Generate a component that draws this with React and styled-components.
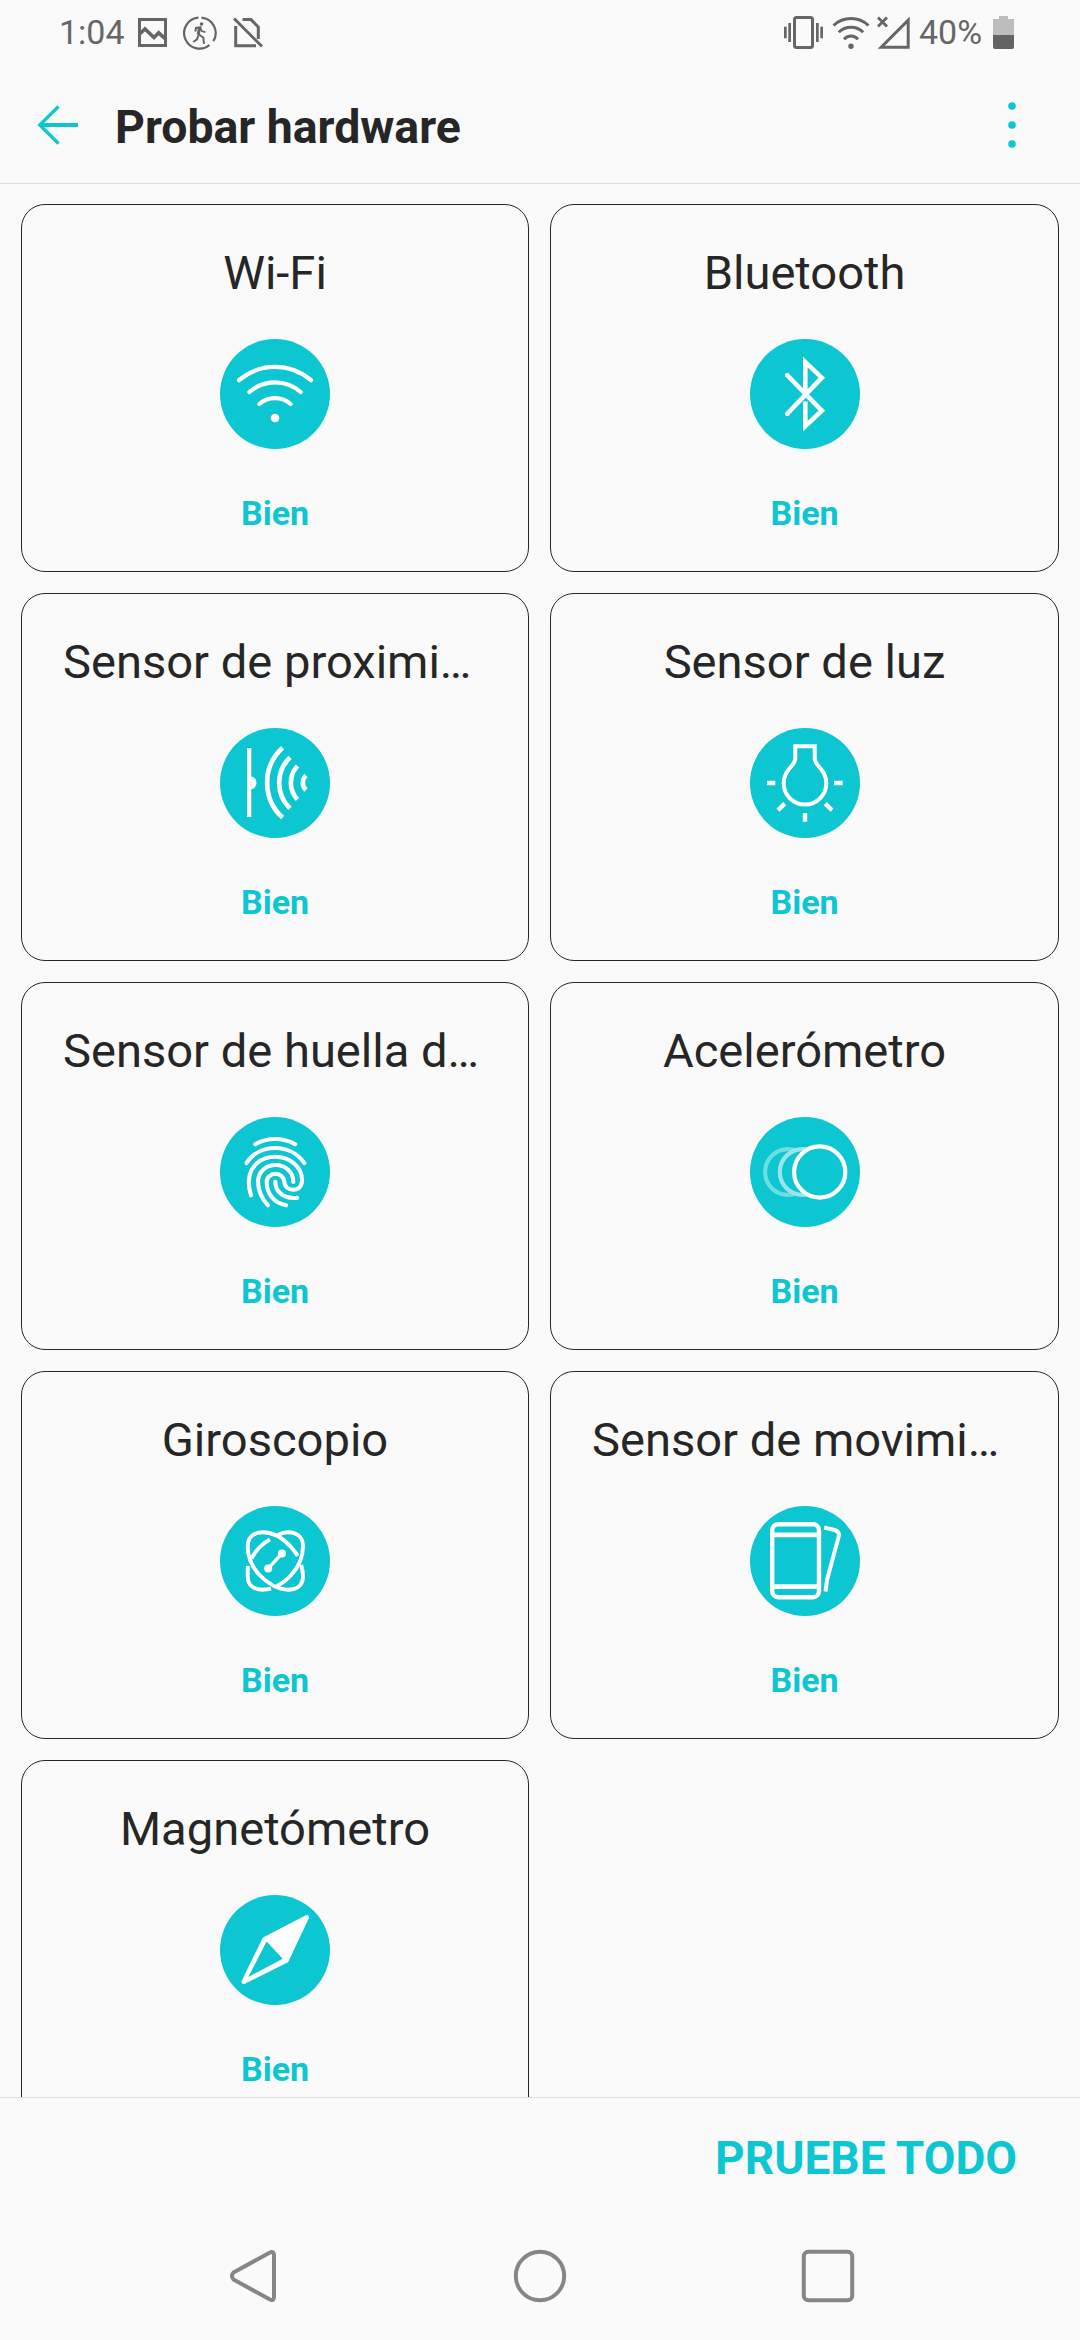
import React from "react";
import styled, { createGlobalStyle } from "styled-components";

const TEAL = "#0cc6d2";
const TEXT = "#262626";
const STATUS = "#666666";
const LINE = "#dddddd";
const NAV = "#868686";

const GlobalStyle = createGlobalStyle`
  * { box-sizing: border-box; }
  body {
    margin: 0;
    background: #fafafa;
    font-family: Roboto, "Noto Sans", sans-serif;
  }
`;

const Screen = styled.div`
  display: flex;
  flex-direction: column;
  width: 1080px;
  height: 2340px;
  overflow: hidden;
  background: #fafafa;
  color: ${TEXT};
`;

const StatusBar = styled.div`
  display: flex;
  justify-content: space-between;
  align-items: flex-start;
  height: 66px;
  padding: 13px 66px 0 59px;
  color: ${STATUS};
`;

const StatusGroup = styled.div`
  display: flex;
  align-items: center;
  height: 39px;
`;

const StatusText = styled.span`
  width: ${(p) => p.$width}px;
  margin-left: ${(p) => p.$left || 0}px;
  font-size: 34px;
  line-height: 39px;
  white-space: nowrap;
`;

const Glyph = styled.svg`
  display: block;
  flex: none;
  width: ${(p) => p.$w}px;
  height: ${(p) => p.$h}px;
  margin-left: ${(p) => p.$left || 0}px;
`;

const Header = styled.header`
  display: flex;
  align-items: center;
  height: 118px;
  padding: 0 62px 0 37px;
  border-bottom: 1px solid ${LINE};
`;

const Title = styled.h1`
  flex: 1;
  margin: 4px 0 0 37px;
  font-size: 46.4px;
  font-weight: 700;
  line-height: 54px;
`;

const Content = styled.main`
  flex: 1;
  min-height: 0;
  padding: 20px 21px;
  overflow: hidden;
`;

const Grid = styled.div`
  display: grid;
  grid-template-columns: 508px 509px;
  grid-auto-rows: 368px;
  gap: 21px;
`;

const Card = styled.section`
  display: flex;
  flex-direction: column;
  align-items: center;
  padding: 41px 0 0;
  border: 1px solid ${TEXT};
  border-radius: 24px;
`;

const CardTitle = styled.h2`
  align-self: stretch;
  margin: 0;
  padding: 0 41px;
  font-size: 47.1px;
  font-weight: 400;
  line-height: 54px;
  text-align: ${(p) => (p.$clipped ? "left" : "center")};
  white-space: nowrap;
`;

const Badge = styled.svg`
  display: block;
  width: 110px;
  height: 110px;
  margin-top: 39px;
`;

const Result = styled.span`
  margin-top: 43px;
  color: ${TEAL};
  font-size: 34px;
  font-weight: 700;
  line-height: 42px;
`;

const ActionBar = styled.footer`
  display: flex;
  justify-content: flex-end;
  align-items: center;
  height: 115px;
  padding: 5px 63px 0 0;
  border-top: 1px solid ${LINE};
`;

const ActionButton = styled.button`
  padding: 0;
  border: 0;
  background: none;
  color: ${TEAL};
  font: 700 46px/54px Roboto, "Noto Sans", sans-serif;
`;

const NavBar = styled.nav`
  display: flex;
  justify-content: space-between;
  align-items: center;
  height: 128px;
  padding: 0 225px 0 227px;
`;

const line = {
  fill: "none",
  stroke: "#fff",
  strokeWidth: 4.4,
  strokeLinecap: "round",
  strokeLinejoin: "round",
};

const icons = {
  wifi: (
    <g {...line} strokeWidth={4.2}>
      <path d="M19 41.2A55.5 55.5 0 0 1 91 41.2" />
      <path d="M29.4 53A38.9 38.9 0 0 1 80.6 53" />
      <path d="M39.4 65A23.5 23.5 0 0 1 70.6 65" />
      <circle cx="55" cy="79" r="4.3" fill="#fff" stroke="none" />
    </g>
  ),
  bluetooth: (
    <g {...line} strokeLinecap="butt" strokeLinejoin="miter">
      <path d="M36.5 35.5L71.8 71.7L55.3 87.2V62.5" strokeWidth="4.6" />
      <path d="M36.5 75.5L71.8 38.7L55.3 23V56" strokeWidth="4.6" />
      <circle cx="37" cy="36" r="2.1" fill="#fff" stroke="none" />
      <circle cx="37" cy="75" r="2.1" fill="#fff" stroke="none" />
    </g>
  ),
  proximity: (
    <g {...line}>
      <rect x="27" y="20" width="4.3" height="69" fill="#fff" stroke="none" />
      <path d="M31 48.5A5.5 6.3 0 0 1 31 61.1Z" fill="#fff" stroke="none" />
      <g strokeWidth="4.7" strokeLinecap="butt">
        <path d="M62.6 19.7A47.2 47.2 0 0 0 62.6 89.6" />
        <path d="M70 29.4A35.5 35.5 0 0 0 70 80.4" />
        <path d="M77.5 38A24.3 24.3 0 0 0 77.5 71.4" />
        <path d="M86 47.4A10 10 0 0 0 86 62" />
      </g>
    </g>
  ),
  bulb: (
    <g {...line} strokeLinecap="butt">
      <path
        d="M45.3 18.2H64.7V31C64.7 37.5 76.3 41.5 76.3 55.3A21.3 21.3 0 0 1 33.7 55.3C33.7 41.5 45.3 37.5 45.3 31Z"
        strokeWidth="4"
        strokeLinejoin="miter"
      />
      <path d="M17 55H25.3M84 55H92.7M55 85V93.8M28 82.3L34.7 75.6M75.3 75.6L82 82.3" />
    </g>
  ),
  fingerprint: (
    <g {...line} strokeWidth={4.1}>
      <path d="M35.3 27.3C47.5 20.3 62.5 20.3 75.2 27.3" />
      <path d="M26.5 46C39.5 26 70.5 26 84.3 46" />
      <path d="M31 78.3C29 72 28.5 68 29 62.5C30 49 41 39.7 55 39.7C70 39.7 82 50 82 63C82 69 78.5 72.7 73.3 72.7C68 72.7 64.5 69.5 64.3 64.7C64 60 60 56.7 55.5 56.7C50.5 56.7 46.7 60.5 46.7 65C46.7 78 55 86 66 88.3" />
      <path d="M48 88.3C42 82 38 74 38 64C38.5 54.5 46 48 55.5 48C65.5 48 73.3 55 73.3 65" />
      <path d="M55.3 64.7C55.3 75 64 82.5 77.3 80.7" />
    </g>
  ),
  accelerometer: (
    <g fill="none" stroke="#fff" strokeWidth="4.2">
      <circle cx="38" cy="55" r="22.9" strokeOpacity=".4" />
      <circle cx="52.7" cy="55" r="25" fill={TEAL} stroke="none" />
      <circle cx="52.7" cy="55" r="22.9" strokeOpacity=".57" />
      <circle cx="69.7" cy="55" r="25.6" fill={TEAL} />
    </g>
  ),
  gyroscope: (
    <g {...line} strokeWidth={3.9} strokeLinecap="butt">
      <path d="M81.3 59C82.4 63 83 67 83 70.5C83 79 77 83.7 68 83.7C58 83.7 47 77 39.5 69C32 61 27.7 50 27.7 40C27.7 31 34 26.3 43 26.3C52 26.3 62 31 71 41C73.7 44 76 47 77.7 50" />
      <path d="M58 29C61.5 27 65 26.3 67.7 26.3C76.7 26.3 83 31 83 40C83 50 78.7 61 71.2 69C67 73.5 62 77.5 57 80" />
      <path d="M50 33.5C46 35.5 42.5 38 39.7 41C36 45 33.5 49 31.5 52.5" />
      <path d="M27.9 60C27.7 63 27.7 67 27.7 70.5C27.7 79 33.7 83.7 42.7 83.7C45.5 83.7 48 83.5 51 82.7" />
      <path d="M48 62.7L62 47.3" strokeWidth="3.4" />
      <circle cx="48.2" cy="62.5" r="4" fill="#fff" stroke="none" />
      <circle cx="62" cy="47.5" r="4" fill="#fff" stroke="none" />
    </g>
  ),
  motion: (
    <g {...line} strokeLinecap="butt">
      <rect x="22.2" y="18.2" width="46.8" height="73" rx="6" />
      <path d="M22 28.8H69M22 80.6H69" strokeWidth="4.7" />
      <path d="M74.2 21.5L84.5 24C88.2 25 89.6 27.3 88.7 30.5L77 74L75.6 85.5" strokeWidth="4" />
    </g>
  ),
  magnetometer: (
    <g>
      <path
        d="M86.8 22.3L66.5 65.5L23.7 86.8L44.5 44.2Z"
        fill="#fff"
        stroke="#fff"
        strokeWidth="4.4"
        strokeLinejoin="round"
      />
      <path d="M46.6 46.5L62.7 63.8L28.3 82Z" fill={TEAL} />
    </g>
  ),
};

const tests = [
  { name: "Wi-Fi", icon: "wifi" },
  { name: "Bluetooth", icon: "bluetooth" },
  { name: "Sensor de proximi…", icon: "proximity", clipped: true },
  { name: "Sensor de luz", icon: "bulb" },
  { name: "Sensor de huella d…", icon: "fingerprint", clipped: true },
  { name: "Acelerómetro", icon: "accelerometer" },
  { name: "Giroscopio", icon: "gyroscope" },
  { name: "Sensor de movimi…", icon: "motion", clipped: true },
  { name: "Magnetómetro", icon: "magnetometer" },
];

function TestCard({ name, icon, clipped }) {
  return (
    <Card>
      <CardTitle $clipped={clipped}>{name}</CardTitle>
      <Badge viewBox="0 0 110 110">
        <circle cx="55" cy="55" r="55" fill={TEAL} />
        {icons[icon]}
      </Badge>
      <Result>Bien</Result>
    </Card>
  );
}

function StatusIcons() {
  return (
    <StatusBar>
      <StatusGroup>
        <StatusText $width={79}>1:04</StatusText>
        <Glyph $w={29} $h={29} viewBox="0 0 29 29" fill="none" stroke={STATUS} strokeWidth="3">
          <rect x="1.5" y="1.5" width="26" height="26" />
          <path d="M1 16.5L7 11L16 19.5L20.7 14.8L28 21.5" strokeWidth="3.6" />
        </Glyph>
        <Glyph $w={34} $h={34} $left={16} viewBox="0 0 34 34" fill="none" stroke={STATUS} strokeWidth="2.2">
          <path d="M18.5 1.6A15.5 15.5 0 0 1 30.3 25.2" />
          <path d="M26.5 29A15.5 15.5 0 1 1 15.5 1.6" />
          <circle cx="18.6" cy="8" r="1.8" fill={STATUS} stroke="none" />
          <path d="M12.3 15.5L13 12L17.3 11.3L15.8 18.5L20.3 21.5L21 28" strokeWidth="2" />
          <path d="M17.3 11.3L18.7 15L22.5 16.2" strokeWidth="1.6" />
          <path d="M16.4 11.5L15 18.5" strokeWidth="2.6" />
          <path d="M15.3 19.5L14 23.3L10.3 26" strokeWidth="2" />
        </Glyph>
        <Glyph $w={30} $h={31} $left={16} viewBox="0 0 30 31" fill="none" stroke={STATUS} strokeWidth="3">
          <path d="M1 1.5L29 29.5" />
          <path d="M2.7 9V28.8H23" />
          <path d="M9.5 2.6H18L25.3 10V22" />
        </Glyph>
      </StatusGroup>
      <StatusGroup>
        <Glyph $w={39} $h={33} viewBox="0 0 39 33" fill={STATUS}>
          <rect x="10.5" y="1.5" width="18" height="30" rx="2" fill="none" stroke={STATUS} strokeWidth="3" />
          <rect x="0" y="10.7" width="2.7" height="11.6" />
          <rect x="4.3" y="7" width="2.7" height="19" />
          <rect x="32" y="7" width="2.7" height="19" />
          <rect x="36.3" y="10.7" width="2.7" height="11.6" />
        </Glyph>
        <Glyph $w={38} $h={33} $left={9} viewBox="0 0 38 33" fill="none" stroke={STATUS} strokeWidth="3">
          <path d="M1.5 9.5A25.4 25.4 0 0 1 36.5 9.5" />
          <path d="M6.8 16.3A17.4 17.4 0 0 1 31.2 16.3" />
          <path d="M12 23.3A9 9 0 0 1 26 23.3" />
          <circle cx="19" cy="30.2" r="2.7" fill={STATUS} stroke="none" />
        </Glyph>
        <Glyph $w={33} $h={33} $left={7} viewBox="0 0 33 33" fill="none" stroke={STATUS} strokeWidth="3">
          <path d="M31.2 4.2V31.2H4.2Z" />
          <path d="M1 1.5L10 10.5M10 1.5L1 10.5" strokeWidth="2.8" />
        </Glyph>
        <StatusText $width={74} $left={9}>40%</StatusText>
        <Glyph $w={21} $h={33} viewBox="0 0 21 33">
          <path d="M6 0H15V3H21V19H0V3H6Z" fill="#bdbdbd" />
          <path d="M0 19H21V31Q21 33 19 33H2Q0 33 0 31Z" fill="#636363" />
        </Glyph>
      </StatusGroup>
    </StatusBar>
  );
}

export default function App() {
  return (
    <>
      <GlobalStyle />
      <Screen>
        <StatusIcons />
        <Header>
          <Glyph $w={41} $h={40} viewBox="0 0 41 40" fill="none" stroke={TEAL} strokeWidth="3.8">
            <path d="M2.5 20H41" />
            <path d="M21.5 1.5L2.7 20L21.5 38.5" strokeWidth="3.2" />
          </Glyph>
          <Title>Probar hardware</Title>
          <Glyph $w={12} $h={48} viewBox="0 0 12 48" fill={TEAL}>
            <circle cx="6" cy="5" r="3.8" />
            <circle cx="6" cy="24" r="3.8" />
            <circle cx="6" cy="43" r="3.8" />
          </Glyph>
        </Header>
        <Content>
          <Grid>
            {tests.map((test) => (
              <TestCard key={test.name} {...test} />
            ))}
          </Grid>
        </Content>
        <ActionBar>
          <ActionButton>PRUEBE TODO</ActionButton>
        </ActionBar>
        <NavBar>
          <Glyph $w={52} $h={54} viewBox="0 0 52 54" fill="none" stroke={NAV} strokeWidth="4" strokeLinejoin="round">
            <path d="M6.5 23.5L42.5 3.7Q47 1.5 47 6.5V47.5Q47 52.5 42.5 50.3L6.5 30.5Q3.5 27 6.5 23.5Z" />
          </Glyph>
          <Glyph $w={54} $h={54} viewBox="0 0 54 54" fill="none" stroke={NAV} strokeWidth="4">
            <circle cx="27" cy="27" r="24.2" />
          </Glyph>
          <Glyph $w={54} $h={54} viewBox="0 0 54 54" fill="none" stroke={NAV} strokeWidth="4">
            <rect x="2.8" y="2.8" width="48.4" height="48.4" rx="4.5" />
          </Glyph>
        </NavBar>
      </Screen>
    </>
  );
}
